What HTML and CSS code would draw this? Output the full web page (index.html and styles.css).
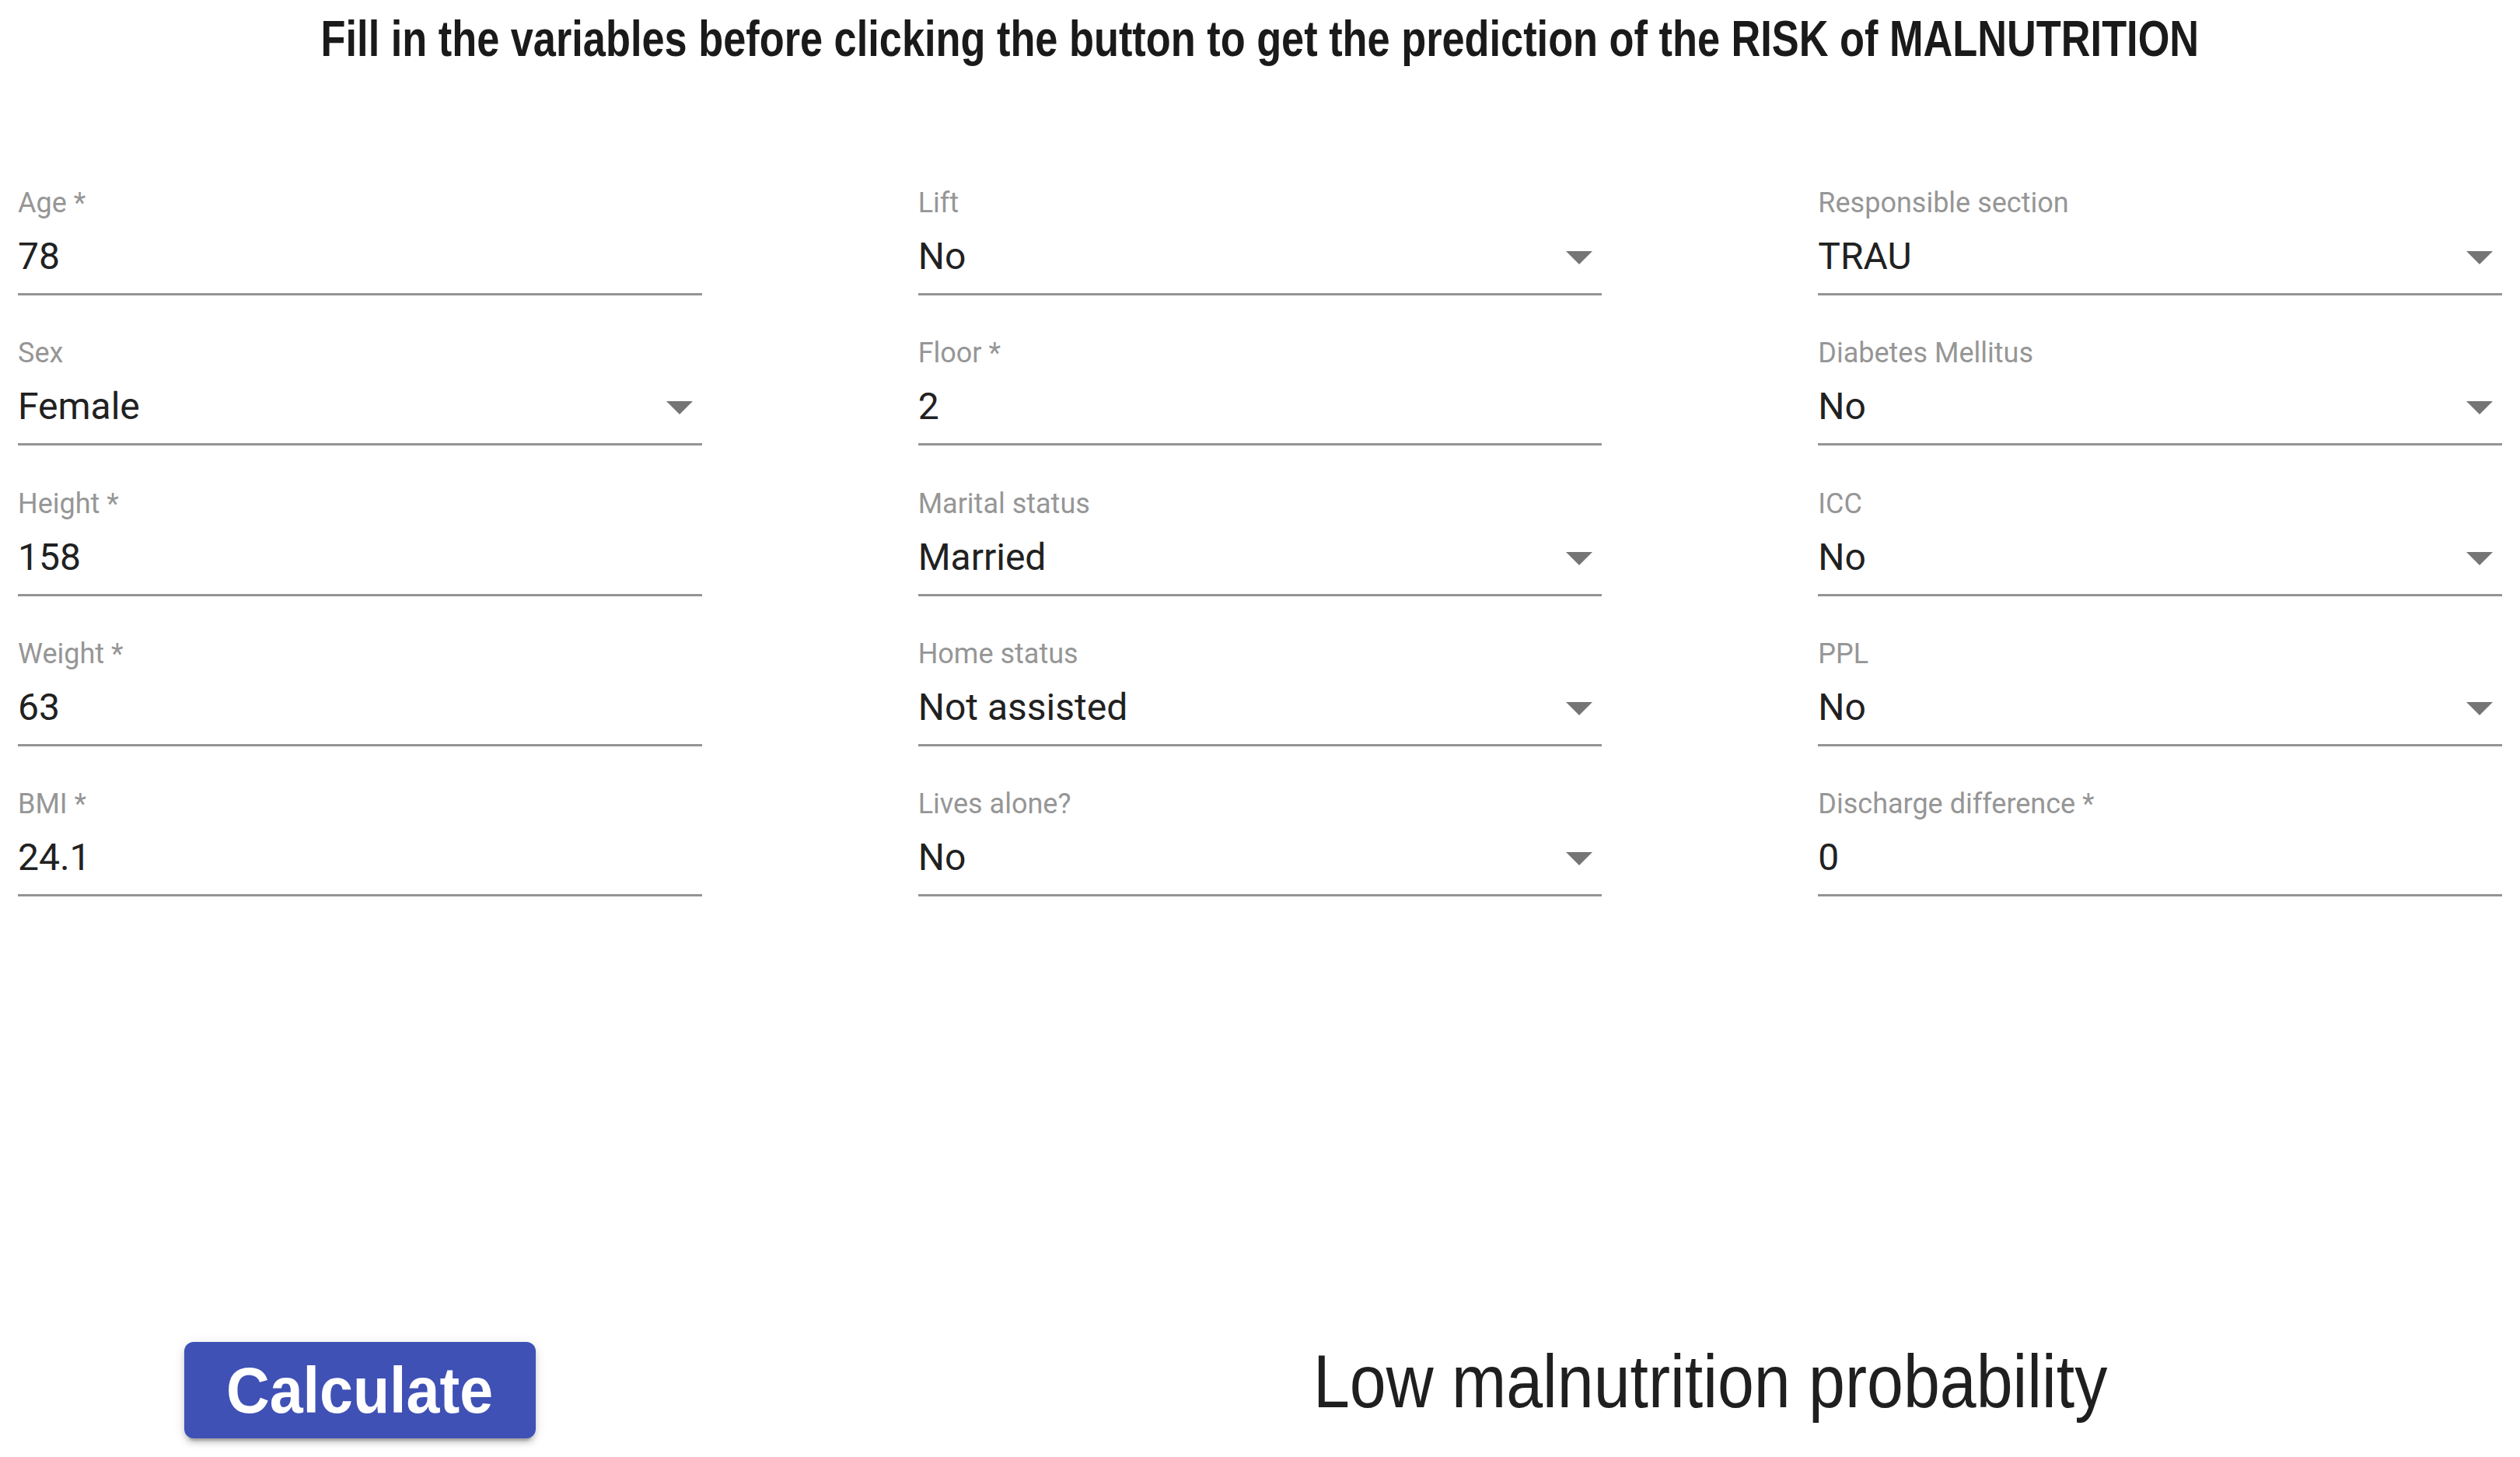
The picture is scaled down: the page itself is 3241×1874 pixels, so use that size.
FILE: index.html
```html
<!DOCTYPE html>
<html lang="en">
<head>
<meta charset="utf-8">
<title>Malnutrition risk</title>
<link rel="stylesheet" href="styles.css">
</head>
<body>
<main class="page">
  <h1 class="title"><span class="title-text">Fill in the variables before clicking the button to get the prediction of the RISK of MALNUTRITION</span></h1>

  <form class="form-grid">
    <div class="field"><label class="label">Age *</label><div class="control"><span class="value">78</span></div></div>
    <div class="field"><label class="label">Lift</label><div class="control"><span class="value">No</span><svg class="arrow" viewBox="0 0 34 17"><polygon points="0,0 34,0 17,17"/></svg></div></div>
    <div class="field"><label class="label">Responsible section</label><div class="control"><span class="value">TRAU</span><svg class="arrow" viewBox="0 0 34 17"><polygon points="0,0 34,0 17,17"/></svg></div></div>

    <div class="field"><label class="label">Sex</label><div class="control"><span class="value">Female</span><svg class="arrow" viewBox="0 0 34 17"><polygon points="0,0 34,0 17,17"/></svg></div></div>
    <div class="field"><label class="label">Floor *</label><div class="control"><span class="value">2</span></div></div>
    <div class="field"><label class="label">Diabetes Mellitus</label><div class="control"><span class="value">No</span><svg class="arrow" viewBox="0 0 34 17"><polygon points="0,0 34,0 17,17"/></svg></div></div>

    <div class="field"><label class="label">Height *</label><div class="control"><span class="value">158</span></div></div>
    <div class="field"><label class="label">Marital status</label><div class="control"><span class="value">Married</span><svg class="arrow" viewBox="0 0 34 17"><polygon points="0,0 34,0 17,17"/></svg></div></div>
    <div class="field"><label class="label">ICC</label><div class="control"><span class="value">No</span><svg class="arrow" viewBox="0 0 34 17"><polygon points="0,0 34,0 17,17"/></svg></div></div>

    <div class="field"><label class="label">Weight *</label><div class="control"><span class="value">63</span></div></div>
    <div class="field"><label class="label">Home status</label><div class="control"><span class="value">Not assisted</span><svg class="arrow" viewBox="0 0 34 17"><polygon points="0,0 34,0 17,17"/></svg></div></div>
    <div class="field"><label class="label">PPL</label><div class="control"><span class="value">No</span><svg class="arrow" viewBox="0 0 34 17"><polygon points="0,0 34,0 17,17"/></svg></div></div>

    <div class="field"><label class="label">BMI *</label><div class="control"><span class="value">24.1</span></div></div>
    <div class="field"><label class="label">Lives alone?</label><div class="control"><span class="value">No</span><svg class="arrow" viewBox="0 0 34 17"><polygon points="0,0 34,0 17,17"/></svg></div></div>
    <div class="field"><label class="label">Discharge difference *</label><div class="control"><span class="value">0</span></div></div>
  </form>

  <section class="bottom">
    <div class="btn-cell"><button class="calc" type="button"><span class="calc-text">Calculate</span></button></div>
    <div class="result-cell"><p class="result"><span class="result-text">Low malnutrition probability</span></p></div>
  </section>
</main>
</body>
</html>
```

FILE: styles.css
```css
html, body {
  margin: 0;
  padding: 0;
  background: #ffffff;
}

body {
  width: 3241px;
  height: 1874px;
  overflow: hidden;
  font-family: Roboto, "Liberation Sans", sans-serif;
  color: #212121;
}

.page {
  padding: 0 23px;
}

.title {
  margin: 0;
  padding-top: 18px;
  font-family: "Liberation Sans", Arial, sans-serif;
  font-weight: 700;
  font-size: 64px;
  line-height: 64px;
  text-align: center;
  color: #1a1a1a;
  white-space: nowrap;
}

.title-text {
  display: inline-block;
  transform: scaleX(0.8175);
  transform-origin: center;
}

.form-grid {
  margin: 162px 0 0;
  display: grid;
  grid-template-columns: repeat(3, 1fr);
  column-gap: 278px;
  row-gap: 57.3px;
}

.field {
  display: flex;
  flex-direction: column;
}

.label {
  font-size: 36px;
  line-height: 35px;
  color: #969696;
  white-space: nowrap;
}

.control {
  margin-top: 27px;
  padding-bottom: 24px;
  border-bottom: 3px solid #949494;
  display: flex;
  align-items: center;
  justify-content: space-between;
  height: 47px;
}

.value {
  font-size: 48px;
  line-height: 47px;
  color: #212121;
  white-space: nowrap;
}

.arrow {
  width: 34px;
  height: 17px;
  margin-right: 12px;
  margin-top: 4px;
  fill: #757575;
  flex: none;
}

.bottom {
  margin-top: 573px;
  display: grid;
  grid-template-columns: repeat(3, 1fr);
  column-gap: 278px;
  align-items: start;
}

.btn-cell {
  display: flex;
  justify-content: center;
}

.calc {
  width: 452px;
  height: 124px;
  border: none;
  border-radius: 12px;
  background: #3f51b5;
  color: #ffffff;
  font-family: "Liberation Sans", Arial, sans-serif;
  font-weight: 700;
  font-size: 83px;
  line-height: 1;
  padding: 0;
  box-shadow: 0 9px 3px -6px rgba(0,0,0,0.2), 0 6px 6px 0 rgba(0,0,0,0.14), 0 3px 15px 0 rgba(0,0,0,0.12);
}

.calc-text {
  display: inline-block;
  transform: scaleX(0.93);
  transform-origin: center;
}

.result-cell {
  grid-column: span 2;
  display: flex;
  justify-content: center;
}

.result {
  margin: 0;
  padding-top: 3px;
  font-family: "Liberation Sans", Arial, sans-serif;
  font-size: 96px;
  line-height: 96px;
  color: #1f1f1f;
  white-space: nowrap;
}

.result-text {
  display: inline-block;
  transform: scaleX(0.878);
  transform-origin: center;
}
```
